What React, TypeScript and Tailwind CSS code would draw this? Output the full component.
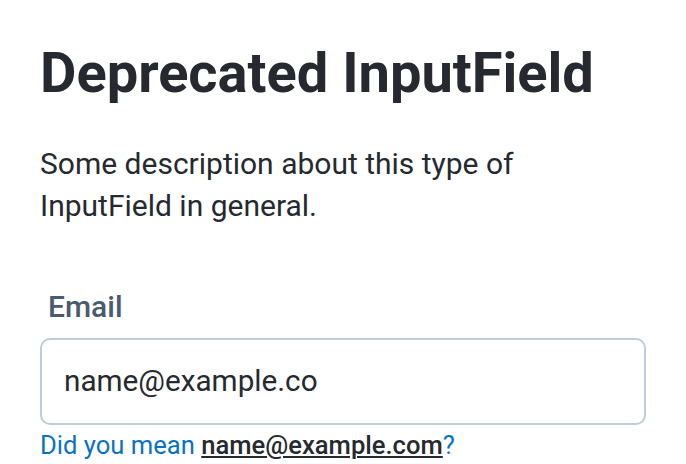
export default function App() {
  return (
    <div className="min-h-screen bg-white px-10 pt-[36px] font-['Roboto',sans-serif] text-[#262a30]">
      <h1 className="text-[56px] font-bold leading-[74px]">
        Deprecated InputField
      </h1>
      <p className="mt-[33px] w-[520px] text-[30px] leading-[42px] text-[#262a30]">
        Some description about this type of InputField in general.
      </p>
      <div className="mt-[60px] w-[606px]">
        <label className="block pl-2 text-[30px] font-medium leading-[40px] text-[#4b5a6e]">
          Email
        </label>
        <div className="mt-[11px] flex h-[87px] items-center rounded-[10px] border-2 border-[#c0ccd8] px-[22px]">
          <input
            className="w-full bg-transparent text-[29.7px] text-[#262a30] outline-none"
            defaultValue="name@example.co"
          />
        </div>
        <p className="mt-[3px] text-[25.6px] leading-[34px] text-[#0a72c6]">
          Did you mean{" "}
          <span className="font-medium text-[#262a30] underline decoration-2 underline-offset-2">
            name@example.com
          </span>
          ?
        </p>
      </div>
    </div>
  );
}
